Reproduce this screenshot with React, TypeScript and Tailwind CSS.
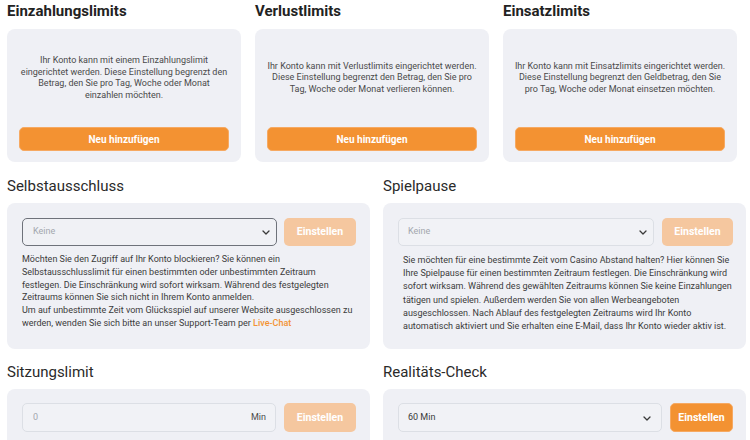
import React from "react";

const font = { fontFamily: "Roboto, 'Noto Sans', Arial, sans-serif" };

function Chevron() {
  return (
    <svg width="8" height="5" viewBox="0 0 8 5" fill="none">
      <path d="M1 1 L4 4 L7 1" stroke="#3a3a3a" strokeWidth="1.3" strokeLinecap="round" strokeLinejoin="round" />
    </svg>
  );
}

function TopCard({ title, text }: { title: string; text: React.ReactNode }) {
  return (
    <div className="w-[234px] flex flex-col">
      <h2 className="text-[15px] leading-[20px] font-bold text-[#222]">{title}</h2>
      <div className="mt-[8px] h-[133px] rounded-[8px] bg-[#eff0f5] px-[12px] pb-[11px] flex flex-col">
        <div className="h-[98px] flex items-center justify-center text-center text-[9px] leading-[11.5px] text-[#4a4a4a]">
          <p className="whitespace-nowrap">{text}</p>
        </div>
        <button className="h-[24px] w-full rounded-[5px] bg-[#f39232] border border-[#f6a962] text-white text-[10px] font-bold">
          Neu hinzufügen
        </button>
      </div>
    </div>
  );
}

export default function App() {
  return (
    <div className="w-[750px] h-[440px] overflow-hidden bg-white" style={font}>
      <div className="pl-[7px] pt-[1px]">
        <div className="flex gap-[14px]">
          <TopCard
            title="Einzahlungslimits"
            text={
              <>
                Ihr Konto kann mit einem Einzahlungslimit
                <br />
                eingerichtet werden. Diese Einstellung begrenzt den
                <br />
                Betrag, den Sie pro Tag, Woche oder Monat
                <br />
                einzahlen möchten.
              </>
            }
          />
          <TopCard
            title="Verlustlimits"
            text={
              <>
                Ihr Konto kann mit Verlustlimits eingerichtet werden.
                <br />
                Diese Einstellung begrenzt den Betrag, den Sie pro
                <br />
                Tag, Woche oder Monat verlieren können.
              </>
            }
          />
          <TopCard
            title="Einsatzlimits"
            text={
              <>
                Ihr Konto kann mit Einsatzlimits eingerichtet werden.
                <br />
                Diese Einstellung begrenzt den Geldbetrag, den Sie
                <br />
                pro Tag, Woche oder Monat einsetzen möchten.
              </>
            }
          />
        </div>

        {/* Row 2 */}
        <div className="mt-[14px] flex gap-[13px]">
          <div className="w-[363px] flex flex-col">
            <h2 className="text-[15px] leading-[20px] text-[#2a2a2a]">Selbstausschluss</h2>
            <div className="mt-[7px] flex-1 rounded-[8px] bg-[#eff0f5] pt-[15px] pb-[16px] pl-[15px] pr-[14px]">
              <div className="flex gap-[7px]">
                <div className="relative flex-1 h-[28px] rounded-[5px] border border-[#6e727a] bg-[#f0f1f5] flex items-center pl-[10px]">
                  <span className="text-[9px] text-[#a3a7ae]">Keine</span>
                  <span className="absolute right-[6px] top-[11px] flex">
                    <Chevron />
                  </span>
                </div>
                <button className="w-[72px] h-[28px] rounded-[5px] bg-[#f5c79f] text-white text-[10.5px] font-bold">
                  Einstellen
                </button>
              </div>
              <p className="mt-[7px] text-[9px] leading-[12.8px] text-[#3b3b3b]">
                Möchten Sie den Zugriff auf Ihr Konto blockieren? Sie können ein Selbstausschlusslimit für einen
                bestimmten oder unbestimmten Zeitraum festlegen. Die Einschränkung wird sofort wirksam. Während des
                festgelegten Zeitraums können Sie sich nicht in Ihrem Konto anmelden.
                <br />
                Um auf unbestimmte Zeit vom Glücksspiel auf unserer Website ausgeschlossen zu werden, wenden Sie sich
                bitte an unser Support-Team per <span className="text-[#f39232] font-medium">Live-Chat</span>
              </p>
            </div>
          </div>
          <div className="w-[363px] flex flex-col">
            <h2 className="text-[15px] leading-[20px] text-[#2a2a2a]">Spielpause</h2>
            <div className="mt-[7px] flex-1 rounded-[8px] bg-[#eff0f5] pt-[15px] pb-[16px] pl-[15px] pr-[13px]">
              <div className="flex gap-[8px]">
                <div className="relative flex-1 h-[28px] rounded-[5px] border border-[#dcdfe5] bg-[#f1f2f6] flex items-center pl-[9px]">
                  <span className="text-[9px] text-[#a3a7ae]">Keine</span>
                  <span className="absolute right-[6px] top-[11px] flex">
                    <Chevron />
                  </span>
                </div>
                <button className="w-[71px] h-[28px] rounded-[5px] bg-[#f5c79f] text-white text-[10.5px] font-bold">
                  Einstellen
                </button>
              </div>
              <p className="mt-[8px] pl-[5px] text-[9px] leading-[13.2px] text-[#3b3b3b]">
                Sie möchten für eine bestimmte Zeit vom Casino Abstand halten? Hier können Sie Ihre Spielpause für
                einen bestimmten Zeitraum festlegen. Die Einschränkung wird sofort wirksam. Während des gewählten
                Zeitraums können Sie keine Einzahlungen tätigen und spielen. Außerdem werden Sie von allen
                Werbeangeboten ausgeschlossen. Nach Ablauf des festgelegten Zeitraums wird Ihr Konto automatisch
                aktiviert und Sie erhalten eine E-Mail, dass Ihr Konto wieder aktiv ist.
              </p>
            </div>
          </div>
        </div>

        {/* Row 3 */}
        <div className="mt-[13px] flex gap-[13px]">
          <div className="w-[363px] flex flex-col">
            <h2 className="text-[15px] leading-[20px] text-[#2a2a2a]">Sitzungslimit</h2>
            <div className="mt-[7px] h-[80px] rounded-[8px] bg-[#eff0f5] pt-[14px] pl-[15px] pr-[14px]">
              <div className="flex gap-[8px]">
                <div className="flex-1 h-[29px] rounded-[5px] border border-[#dcdfe5] bg-[#f1f2f6] flex items-center justify-between pl-[10px] pr-[9px]">
                  <span className="text-[9px] text-[#a3a7ae]">0</span>
                  <span className="text-[9px] text-[#4a4a4a]">Min</span>
                </div>
                <button className="w-[72px] h-[29px] rounded-[5px] bg-[#f5c79f] text-white text-[10.5px] font-bold">
                  Einstellen
                </button>
              </div>
            </div>
          </div>
          <div className="w-[363px] flex flex-col">
            <h2 className="text-[15px] leading-[20px] text-[#2a2a2a]">Realitäts-Check</h2>
            <div className="mt-[7px] h-[80px] rounded-[8px] bg-[#eff0f5] pt-[14px] pl-[15px] pr-[13px]">
              <div className="flex gap-[8px]">
                <div className="relative flex-1 h-[29px] rounded-[5px] border border-[#dcdfe5] bg-[#f1f2f6] flex items-center pl-[9px]">
                  <span className="text-[9px] text-[#3a3a3a]">60 Min</span>
                  <span className="absolute right-[10px] top-[12px] flex">
                    <Chevron />
                  </span>
                </div>
                <button className="w-[63px] h-[29px] rounded-[5px] bg-[#f39232] border border-[#f6a962] text-white text-[10.5px] font-bold">
                  Einstellen
                </button>
              </div>
            </div>
          </div>
        </div>
      </div>
    </div>
  );
}
